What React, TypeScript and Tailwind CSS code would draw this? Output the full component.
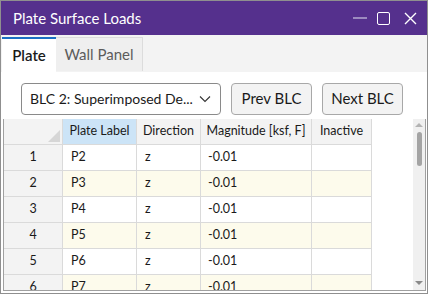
import React from "react";

const rows = [
  { n: 1, label: "P2" },
  { n: 2, label: "P3" },
  { n: 3, label: "P4" },
  { n: 4, label: "P5" },
  { n: 5, label: "P6" },
  { n: 6, label: "P7" },
];

const font = { fontFamily: 'Lato, "Noto Sans", sans-serif' };

export default function App() {
  return (
    <div
      className="w-[428px] h-[294px] overflow-hidden border border-[#8f8f8f] bg-white flex flex-col whitespace-nowrap"
      style={font}
    >
      {/* Title bar */}
      <div className="h-[34px] shrink-0 bg-[#55308d] flex items-center pl-[12px] text-white">
        <span className="text-[15px] leading-none">Plate Surface Loads</span>
        <div className="ml-auto flex items-center h-full">
          <div className="w-[14px] h-[2px] bg-[#9c8abf] mr-[10px]" />
          <div className="w-[13px] h-[13px] border-[1.5px] border-white rounded-[2px] mr-[14px]" />
          <svg width="13" height="13" viewBox="0 0 13 13" className="mr-[10px]">
            <path d="M1 1 L12 12 M12 1 L1 12" stroke="white" strokeWidth="1.4" />
          </svg>
        </div>
      </div>

      {/* Tabs */}
      <div className="h-[37px] shrink-0 bg-[#f3f3f3] flex items-end pl-[1px]">
        <div className="w-[54px] h-[35px] bg-white border-t-2 border-[#1a6fc4] flex items-center justify-center text-[15px] text-[#1a1a1a] font-semibold">
          Plate
        </div>
        <div className="w-[87px] h-[34px] mb-[1px] bg-[#efefef] border-t border-r border-[#dcdcdc] flex items-center justify-center text-[15px] text-[#5c5c5c]">
          Wall Panel
        </div>
      </div>

      {/* Toolbar */}
      <div className="flex items-center pt-[7px] pl-[20px] gap-[10px] h-[46px] shrink-0">
        <div className="w-[200px] h-[32px] border border-[#8a8a8a] rounded-[4px] flex items-center pl-[8px] pr-[9px] text-[14px] text-[#1a1a1a]">
          <span>BLC 2: Superimposed De...</span>
          <svg width="12" height="8" viewBox="0 0 12 8" className="ml-auto">
            <path d="M1 1.5 L6 6.5 L11 1.5" fill="none" stroke="#333" strokeWidth="1.1" />
          </svg>
        </div>
        <button className="w-[81px] h-[32px] border border-[#a8a8a8] rounded-[4px] bg-[#f3f3f3] text-[15px] text-[#1a1a1a]">
          Prev BLC
        </button>
        <button className="w-[81px] h-[32px] border border-[#a8a8a8] rounded-[4px] bg-[#f3f3f3] text-[15px] text-[#1a1a1a]">
          Next BLC
        </button>
      </div>

      {/* Grid */}
      <div className="ml-[2px] mr-[1px] mt-[1px] h-[172px] border-l border-r border-b border-[#a0a0a0] flex text-[12.5px] text-[#1a1a1a] overflow-hidden">
        <div className="flex flex-col">
          <div className="flex h-[26px] shrink-0">
            <div className="w-[59px] bg-[#f3f3f3] border-r border-b border-[#dadada] relative">
              <svg width="12" height="12" viewBox="0 0 12 12" className="absolute right-[2px] bottom-[2px]">
                <path d="M12 0 L12 12 L0 12 Z" fill="#d6d6d6" />
              </svg>
            </div>
            <div className="w-[74px] bg-[#cce4f7] border-r border-b border-[#dadada] flex items-center justify-center">Plate Label</div>
            <div className="w-[64px] bg-[#f3f3f3] border-r border-b border-[#dadada] flex items-center justify-center">Direction</div>
            <div className="w-[111px] bg-[#f3f3f3] border-r border-b border-[#dadada] flex items-center justify-center">Magnitude [ksf, F]</div>
            <div className="w-[60px] bg-[#f3f3f3] border-r border-b border-[#dadada] flex items-center justify-center">Inactive</div>
          </div>
          {rows.map((r) => {
            const bg = r.n % 2 === 0 ? "bg-[#fdfbec]" : "bg-white";
            return (
              <div key={r.n} className="flex h-[26px] shrink-0">
                <div className="w-[59px] bg-[#f3f3f3] border-r border-b border-[#dadada] flex items-center justify-center">{r.n}</div>
                <div className={`w-[74px] ${bg} border-r border-b border-[#dadada] flex items-center pl-[8px]`}>{r.label}</div>
                <div className={`w-[64px] ${bg} border-r border-b border-[#dadada] flex items-center pl-[8px]`}>z</div>
                <div className={`w-[111px] ${bg} border-r border-b border-[#dadada] flex items-center pl-[7px]`}>-0.01</div>
                <div className={`w-[60px] ${bg} border-r border-b border-[#dadada]`} />
              </div>
            );
          })}
        </div>
        <div className="flex-1" />
        {/* Scrollbar */}
        <div className="w-[12px] bg-[#f0f0f0] flex flex-col items-center">
          <svg width="8" height="6" viewBox="0 0 8 6" className="mt-[3px]">
            <path d="M0 5 L4 1 L8 5 Z" fill="#b3b3b3" />
          </svg>
          <div className="w-[5px] h-[34px] bg-[#a4a4a4] rounded-full mt-[4px]" />
          <div className="flex-1" />
          <svg width="8" height="6" viewBox="0 0 8 6" className="mb-[4px]">
            <path d="M0 1 L8 1 L4 5 Z" fill="#8a8a8a" />
          </svg>
        </div>
      </div>
    </div>
  );
}
